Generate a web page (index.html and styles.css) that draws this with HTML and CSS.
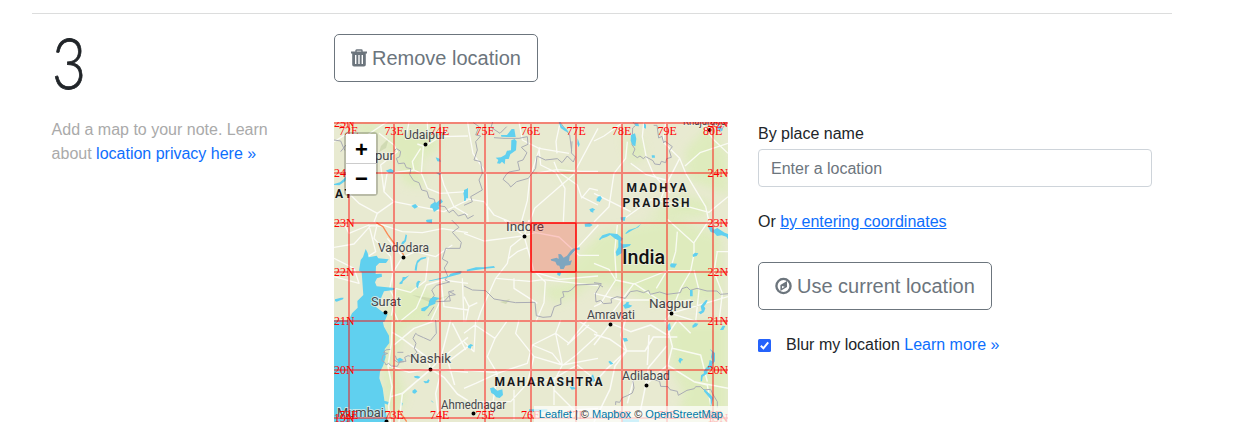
FILE: index.html
```html
<!DOCTYPE html>
<html lang="en">
<head>
<meta charset="utf-8">
<title>Add a location</title>
<link rel="stylesheet" href="styles.css">
</head>
<body>
<section class="step">
  <aside class="intro">
    <div class="number">3</div>
    <p class="help">Add a map to your note. Learn about <a href="#">location privacy here »</a></p>
  </aside>
  <div class="main">
    <button class="btn" type="button">
      <svg class="trash" width="16" height="18" viewBox="0 0 16 18"><path d="M5 3V1.6Q5 1 5.6 1h4.8q.6 0 .6.6V3" fill="none" stroke="currentColor" stroke-width="1.4"/><path fill="currentColor" fill-rule="evenodd" d="M0 2.6h16v1.9h-1.2v11.2q0 1.8-1.8 1.8H3q-1.8 0-1.8-1.8V4.5H0zM4 6v9h1.4V6zm3.3 0v9h1.4V6zm3.3 0v9H12V6z"/></svg>
      <span>Remove location</span>
    </button>
    <div class="columns">
      <div class="map">
        <svg class="tiles" viewBox="334 122 394 300">
          <defs><filter id="soft" x="-30%" y="-30%" width="160%" height="160%"><feGaussianBlur stdDeviation="5"/></filter></defs>
          <rect class="land" x="334" y="122" width="394" height="300"/>
          <g class="green" filter="url(#soft)">
            <path d="M395 128l40 0 5 19-20 15 5 25-20-2-10-28-12-10zM395 285l30 2 14 13-8 21-25 5-12 35 12 34-8 20h-14l-2-80zM602 232l70-14 50 18v65l-68 2-32-16-46-2-14-12zM622 137l20 2 4 18-16 6zM685 150l25-26 18 30v41l-40-15zM685 195l28 7-10 16-58-2zM668 322l60 0v98h-50l5-28-10-20zM540 287l36-4 10 8-31 13z"/>
            <path d="M555 165l20 8-8 10zM343 122l38 0-6 20zM345 355h15v20z"/>
          </g>
          <path class="hill" d="M381 146l8-8-3 10-7 4zM412 295l24 4 14-4-18 8zM500 302l10-3-4 5z"/>
          <g transform="translate(334 120) scale(.33333)">
            <path class="road" d="M0 65L40 40 95 48 160 5M135 40L180 75 190 95 140 135 150 215M250 72L268 78 262 160 240 150 235 125 260 85M280 75L318 50 402 48M280 5L282 45M262 160L280 205 318 220 402 215M160 155L150 215 180 245 130 280 120 306M225 6L215 60M318 155L330 195 360 260 402 285M40 215L75 250 130 280M240 150L160 160M402 240L330 275 180 245"/>
            <path class="border" d="M0 60l20 3 12 28M180 92l8 -6 12 8-3 16-10 5 6 16 18-2 6 14 14 3-4 18 12 18 16 6 8 22 16 4 6 20 16 4 4 18 28 4 12 18 12-8 16 18 20-6 8 14 18-10M36 75L20 95"/>
            <path class="water" d="M155 152l15-6 10 6-2 8-14-2zM305 112l12 4 4 9-11-1zM306 158l16 1-5 7zM232 257l12-5 8 8-10 6zM290 254l12-8 5 2 14-11 6 8-14 12 4 8-17 11-5-12-7-1zM388 218l14-14v34l-12-8zM278 299l17-1-3 8h-9zM0 192l18-5 18-16-2 12-18 13-16-1z"/>
          </g>
          <g transform="translate(464 120) scale(.33333)">
            <path class="road" d="M10 0l5 35 12 65 40 60 5 146M0 235l60 10 30 40 50 21M165 5l10 55 50 25 90 15M225 85l5 50 45 22 28 48M228 82l-30 90-8 70-18 64M402 25l-75 140-115 100-15 41M270 125l12 30 58 40 12 35 50 25M350 154l-70-5-60 10M303 205l-5 100M402 154h-52M290 0l-14 65 3 35M352 235l25-30 25 6"/>
            <path class="border" d="M88 0l-7 22 27 18 20-20M28 8L45 20 35 45 50 48 35 65 40 90 30 120 50 125 55 160 45 180 55 210 20 230 25 245 0 256M90 53l30 2 45 0 25-5 2 23-20 9 17 16-12 22-16 5 6 25-32 6-8 7-10 15 18 15 5 8 18-16 35-10 22-30 4-37 25 12 36-4 14 12 16-20 18 18 6-15-12-12 2-35M287 5l30 40 6 48"/>
            <path class="water" d="M111 45l18 0 14-18 8 0 4 24-25 0-18-1zM142 61l10-4 6 7-2 27-17 12-5 14-10 0-2 16-8-8-6 6-9-1 4-10-8-7 16-1 13-8 5-12 12-1zM288 5l6 13 14 10 6 9-10-3-14-10-6-17zM341 55l6 18-3 9-4-10zM376 268l10-4 8 5-6 3v6l-8-3zM0 210l12-5 0 15-7 22-5 1zM398 235h4v9h-4z"/>
          </g>
          <g transform="translate(594 120) scale(.33333)">
            <path class="road" d="M150 0l-5 50 12 62 22 52 50 55M110 130l45 33 60 17M215 5l-8 60 50 50 18 45 60 100 10 46M257 115l-38 75-20 50M402 70L318 98l-45 40M402 230l-57 47-75-20-100-18-90 65M0 220l50 25 60 30M100 65l-5 50-35 45-15 100-45 46M0 63l30-15 55-40M320 5l40 55 42 40"/>
            <path class="border" d="M112 0l13 16-9 8-2 50 9 13-7 16 14 10 8-5 10 8 7-6 22 12 5 10 16 2 4-10 13 4 3-12 14-4-6-20 9-12-22-17-4 6-5-20-10 5-5-38-10 0M402 0l-20 30"/>
            <path class="water" d="M111 45l12-5 4 16-3 23-8-3-6-14zM121 8l12 2 2 9-10-1zM150 10l6 4v12l-6-3zM173 106l9 0 1 7-9 0zM11 230l8-2 5 7-7 11-8-4zM80 292l15-1-3 12-11-2zM375 12l12 18-7 5-12-12z"/>
          </g>
          <g transform="translate(334 220) scale(.33333)">
            <path class="road" d="M0 82l60-10 50-55 35 2M25 0l20 40 60-25 20 80-40 25M125 8l80 27 60 3 60-12 77 12M130 10l-10 45 50 55 10 95M205 112l-28 45-10 50 15 30-10 50M210 110l35-15 60 15 50-35M283 112l-8 70-45 35-45-12M185 205l-5 70 13 30M0 170l75 20-15-45-60-30M160 55l50 60M402 190l-75-10-50 15-30 70-50 40M320 170l10 90 72 10M385 175l5 131M320 240l-30 65"/>
            <path class="border" d="M353 0l22 22-20 15 27 30-4 18-43 0-10 32 17 9-11 18 10 24-8 12 14 6-40 10-14 14 8 16-16 20 22-1 42-2-5-28 16-3M330 245l16-18 18-3-18-9M300 260l-18 28"/>
            <path class="highway" d="M127 8l20 12 14 23 20 28 18 18 10 16"/>
            <path class="water" d="M95 87l6 12 3 13 24-5 5 8 31 3-8 11-20 0-10 10-1 23 18-1 1 9-15 5-6 12 5 12 54 5-2 6-30 4-15 35-9 12 20 15 15 7-10 23H42l12-26 17-17-1-20 18-18-5-68-8-5 5-32 7-9zM199 80l5-14 7-5 4-18 4 3-3 18-8 9-8 8zM244 137l5-15 12-9 16-3-1 5-15 4-10 11-3 22-6-1zM196 189l8-8 2-10 9 0 11-5-12 12-7 6-2 7-8 2zM247 189l5-7 8 2-5 6-3 15-5-4zM283 182l36-8 25-6 5-7 30-8 5 2-5 7-26 7-21 6-46 9zM262 265l20-8 6-20 12-7 17 4-12 8-1 9-17 7-15 16-10-1zM3 238l18-5 8 0-2 5-19 7-5-2zM276 0h18v10l-16-3z"/>
          </g>
          <g transform="translate(464 220) scale(.33333)">
            <path class="road" d="M0 40l60 23 115-15 40-10 70 13 60 55 60 0M120 0l60 48 10 35 20 70 34 33-4 62-25 58M180 48l-40 32-10 50-35 45-45 100-10 30M97 175l100 9 40-5 165 18M135 115l25-20 30-12M180 50l15-50M217 158l68 20 117-10M325 100l78-85M0 230l15 30-10 45M15 260l25-12M150 175v30l70 45"/>
            <path class="border" d="M0 198l25 12 40 2 25 25 65 11 58-1 4 40 20 5 24-2 10-30 20-7-1-18 10-5-4-15 16 0 10-5 15-15 65-3 15 9"/>
            <path class="water" d="M8 149l28-7 24 0 30-4 3 5-30 3-54 8zM260 118l18-5 6 4-1-15 8 1 8 10 10-6 10-13 8-8 20-4v7l-12 0-18 20-2 15 9-3-5 14-15 2-5 10-10 0-3-10-7-1-5-11-12-3zM280 156h12l-4 12-8-3zM362 11l15-2 9 6-8 5-15 0z"/>
          </g>
          <g transform="translate(594 220) scale(.33333)">
            <path class="road" d="M0 130l45 18 20 32 55 12 100-40 70 0 10-50 0-32-80-72M70 15l-8 80 5 80M300 68l40-60M120 190l90 60 80-10M120 190l-65 88M65 180l-45 70-20 10M230 280l30-75 32-55M230 280l70-20 102-30M230 280l-50-40-100 0-80-20M230 280l-20 26M300 150l15 60-10 95M370 95l-10 60 25 65-10 85M402 95h-35M217 155l-30 50M230 280l80 25M250 35l-5 60-12 40"/>
            <path class="border" d="M0 188l22 3-18 30 2 25 14-5 8 10 25-2-2-12 18-7 25 5 15-20 20-3 20 6 15-7 5 12 28-7 22 7 40-5 5-12 15-5 10 10 20-6 30 8 30 0 10 10 25-2"/>
            <path class="water" d="M15 58l10-12 22-7 3 5-11 6-17 6-4 5zM48 40l22 2 17 14-8 10 5 7 27-1-4 6-21 7-2 14-16 10-3-13 8-15 0-20-10-5-13-10zM94 40l10-10 22-7 15-11-8 10-17 8-20 12zM228 135l4-5 17 1-7 12-12-1zM296 104l7-6 10 2-5 8-11 3zM342 20l10-1 8 10 10-5 22 14 12 5v18l-7-11-14-4-14 2-8-9-11-3zM87 256l7-4 4-6 8 1-3 6 12 4-9 6-13 3zM288 209l8 2v18l-8 0zM336 240l5 1-5 10-6 8 4 6-4 11-10 7-7-6 10-5-3-13 10-12z"/>
          </g>
          <g transform="translate(334 320) scale(.33333)">
            <path class="water" d="M40 0h105l5 20 15 27 1 22-14 18 3 24-8 27-9 17-2 20 10 30 5 35 2 22 5 30 4 14H0V0zM188 118l10-5 11 7-8 4-6 5zM240 169l10-2 10 4-5 5-13-3zM268 183l10 1 5-6 4 3-4 8-10 1zM235 212l8-5 7 7-7 7-7-2zM150 242l15 4-4 8-10-4zM200 245l6 5-2 9zM290 240l10 8-6-2z"/>
            <path class="road wide" d="M175 0l-3 70-10 70 12 60-10 60 5 46M180 75l60-50 70-25M290 147l-65 10-60-20M290 147l-85 75-10 84M290 147l30-30 82-65M290 147l40 25 40 50 32 20M290 147l112 10M170 230l35-10 85-72M350 0l-30 115M290 147l-10-35-80-60-25-15M402 80l-60 45 20 70M320 160l-15 60 10 85M355 10l40 80"/>
            <path class="border" d="M305 0l2 40-18 22-20-9-18-8-6-5-8 15 9 15-5 15 8 12-15 13-12-3-10 5 4 12-18 0-8 15-18-1-8-8-8 5-4-8-9-6 4-15 14-6-12-2 6-8 14-2M190 97h18M184 107l4 12M181 120l12 8 17-3"/>
            <path class="highway" d="M193 270l15 20 10 15M168 275v20"/>
          </g>
          <g transform="translate(464 320) scale(.33333)">
            <path class="road" d="M35 0l-5 95-30-30M0 40l33-25 60 40 35-50M95 50l-25 60 30 50-65 30-35 15M100 160l90-30 15-55 70-35 40 30 60-55M165 0l-10 40 55 70 85 25 107-20M275 40l20 95-25 50 0 70M210 110l-20 80-50 55-110 0M270 210l60 60 72-5M402 45l-65 60-40 30M290 0l-15 40M340 0l60 40M0 150l100 8M100 160l-15 100M205 75l60 25 28 35M190 190l80-15 70-40 62 50M150 210v90M370 0l-60 75"/>
            <path class="water" d="M11 78l9-6 8 4-7 4v6l-8-2zM78 205l10-3 12 10 15-4 2 17-10 9-10-2-8-9-7-4zM285 180l15 3 2 8-10 1zM317 201l11-4 7 10-12 2zM382 168l5-5 7 20-11 4zM195 268h55v7h-55zM0 250l10-5-4 9z"/>
          </g>
          <g transform="translate(594 320) scale(.33333)">
            <path class="road wide" d="M0 75l50-65 60 25 60-20 50 30 30-45M95 0l-15 45 18 48-35 45-15 70-48 98M98 93l55 0 25-42 72 0M98 93l-50-35-48-15M160 135l5-90M155 195l8-52 55-65M155 195l-10 50-13 60M155 195l65-60 80 50 102 20M220 140l15-60-20-80M0 190l40-45 55-50M300 185l40 10 10 60M100 250l20-75M250 0l40 40M235 85l85 20 20 80"/>
            <path class="border" d="M65 255l0-10 12 2 8-14 15-6 15-8 5-15-3-20 15-18 20 5 45 13 3 15 22 1 6 9 22 5 3 12 26-15 22-5 4-6 15 0 10 10 20-2 5 12 15 25 0 18"/>
            <path class="water" d="M86 55l12-1 4 9-11 2zM221 15l7-6 3 18-7 6-4-8zM295 17l8-8 10 2-5 8-12 5zM378 30l8-13 8 1-6 12zM253 122l4-9 5 2 6 5-6 2-3 9zM43 125l5-3 10 9-8 3zM347 86l7 10-3 15 4 12-8-3-3 15-15 17 1 8-9 6-1 18 4 0 2-14 15-10-1-8 16-10-2-8 9-10 0-25zM330 207l18 15 10 12-8 28 0-24-20-24zM85 298h50v8H85z"/>
          </g>
          <g class="places">
            <text x="404" y="139" textLength="42" lengthAdjust="spacingAndGlyphs">Udaipur</text><text x="375" y="160">pur</text><text x="378" y="252" textLength="51" lengthAdjust="spacingAndGlyphs">Vadodara</text><text x="506" y="230.500" textLength="38" lengthAdjust="spacingAndGlyphs">Indore</text><text x="371" y="306" textLength="30" lengthAdjust="spacingAndGlyphs">Surat</text><text x="410" y="363" textLength="41" lengthAdjust="spacingAndGlyphs">Nashik</text><text x="649" y="308" textLength="44" lengthAdjust="spacingAndGlyphs">Nagpur</text><text x="587" y="319" textLength="48" lengthAdjust="spacingAndGlyphs">Amravati</text><text x="622" y="380" textLength="48" lengthAdjust="spacingAndGlyphs">Adilabad</text><text x="441" y="409" textLength="65" lengthAdjust="spacingAndGlyphs">Ahmednagar</text><text x="337" y="417" textLength="47" lengthAdjust="spacingAndGlyphs">Mumbai</text><text x="683" y="125" textLength="43" lengthAdjust="spacingAndGlyphs">Khajuraho</text>
            <g class="state"><text x="626.500" y="192" textLength="60">MADHYA</text><text x="622.500" y="207" textLength="67">PRADESH</text><text x="494.500" y="385.500" textLength="108">MAHARASHTRA</text><text x="335" y="198" textLength="17">AT</text></g>
            <text class="country" x="622" y="264" textLength="43" lengthAdjust="spacingAndGlyphs">India</text>
          </g>
          <path class="dots" d="M425.500 144.500h0M403.500 257.500h0M524.500 236.500h0M385.500 312.500h0M430.500 369.500h0M671.500 313.500h0M610.500 324.500h0M646.500 385.500h0M473.500 413.500h0M386.500 421.500h0M709.500 130h0"/>
          <path class="grid" d="M349 122v300M394 122v300M440 122v300M485 122v300M531 122v300M576 122v300M622 122v300M667 122v300M713 122v300M334 123h394M334 173h394M334 223h394M334 272h394M334 321h394M334 370h394M334 418h394"/>
          <rect class="selected" x="531" y="223" width="45" height="49"/>
          <g class="coords">
            <text x="339" y="135">72E</text><text x="384.500" y="135">73E</text><text x="430" y="135">74E</text><text x="475.500" y="135">75E</text><text x="521" y="135">76E</text><text x="566.500" y="135">77E</text><text x="612" y="135">78E</text><text x="657.500" y="135">79E</text><text x="703" y="135">80E</text>
            <text x="339" y="419">72E</text><text x="384.500" y="419">73E</text><text x="430" y="419">74E</text><text x="475.500" y="419">75E</text><text x="521" y="419">76E</text><text x="566.500" y="419">77E</text><text x="612" y="419">78E</text><text x="657.500" y="419">79E</text><text x="703" y="419">80E</text>
            <text x="334" y="127">25N</text><text x="334" y="177">24N</text><text x="334" y="227">23N</text><text x="334" y="276">22N</text><text x="334" y="325">21N</text><text x="334" y="374">20N</text><text x="334" y="422">19N</text>
            <text x="707.500" y="127">25N</text><text x="707.500" y="177">24N</text><text x="707.500" y="227">23N</text><text x="707.500" y="276">22N</text><text x="707.500" y="325">21N</text><text x="707.500" y="374">20N</text><text x="707.500" y="422">19N</text>
          </g>
        </svg>
        <div class="zoom"><a href="#">+</a><a href="#">−</a></div>
        <div class="credit"><a href="#">Leaflet</a> | © <a href="#">Mapbox</a> © <a href="#">OpenStreetMap</a></div>
      </div>
      <form class="controls">
        <label for="place">By place name</label>
        <input id="place" class="place" type="text" placeholder="Enter a location">
        <p class="or">Or <a href="#">by entering coordinates</a></p>
        <button class="btn current" type="button">
          <svg class="compass" width="17" height="18" viewBox="0 0 18 18"><circle cx="9" cy="9" r="7.500" fill="none" stroke="currentColor" stroke-width="2.500"/><path fill="currentColor" fill-rule="evenodd" d="M12.700 3.800v6.300l-7 4.300V8zM7.400 8.900v2.700l2.900-1.800z"/></svg>
          <span>Use current location</span>
        </button>
        <div class="blur">
          <svg class="check" width="13" height="13" viewBox="0 0 13 13"><rect width="13" height="13" rx="1.500" fill="#2563fb"/><path d="M2.800 6.800l2.600 2.500L10.200 3.400" fill="none" stroke="#fff" stroke-width="2"/></svg>
          <span>Blur my location <a href="#">Learn more »</a></span>
        </div>
      </form>
    </div>
  </div>
</section>
</body>
</html>
```
FILE: styles.css
```css
* { box-sizing: border-box; }
body {
  margin: 0;
  padding: 13px 0 0 32px;
  overflow: hidden;
  background: #fff;
  color: #212529;
  font: 16px/24px "Liberation Sans", Arial, sans-serif;
}
a { color: #0d6efd; text-decoration: none; }
.step {
  display: flex;
  width: 1140px;
  padding: 20px 20px 0 19.6px;
  border-top: 1px solid #dcdddd;
}
.intro { width: 282.4px; }
.number {
  width: 40px;
  height: 84px;
  font: 300 70px/56px Lato, sans-serif;
  -webkit-text-stroke: .8px #212529;
  transform: scaleX(.84);
  transform-origin: left;
}
.help { width: 225px; margin: 0; color: #aaa; }
.main { width: 818px; }
.btn {
  display: flex;
  align-items: center;
  gap: 5px;
  width: max-content;
  height: 48px;
  padding: 0 16px;
  border: 1px solid #6c757d;
  border-radius: 5px;
  background: #fff;
  color: #6c757d;
  font: 20px/30px "Liberation Sans", Arial, sans-serif;
}
.columns { display: flex; gap: 30px; margin-top: 40px; }
.map { position: relative; width: 394px; height: 300px; overflow: hidden; }
.tiles { display: block; width: 394px; height: 300px; }
.land { fill: #e8ead1; }
.green { fill: #dcecb9; opacity: .8; }
.hill { fill: #c8d3a9; opacity: .7; }
.road { fill: none; stroke: #fff; stroke-width: 4; stroke-linejoin: round; opacity: .8; }
.wide { stroke-width: 4.500; }
.border { fill: none; stroke: #a9abb4; stroke-width: 3; stroke-linejoin: round; }
.highway { fill: none; stroke: #fa8a55; stroke-width: 4; }
.water { fill: #60d0ef; }
.places {
  fill: #45474b;
  stroke: #f0f1e5;
  stroke-width: 2px;
  stroke-opacity: .7;
  paint-order: stroke;
  font: 13px Roboto, sans-serif;
}
.state { fill: #17191b; font-size: 12px; font-weight: 700; }
.country { fill: #111; font-size: 20px; font-weight: 500; }
.dots { stroke: #000; stroke-width: 4; stroke-linecap: round; }
.grid { stroke: #f00; stroke-opacity: .44; stroke-width: 2; }
.selected { fill: #f00; fill-opacity: .2; stroke: #f00; stroke-width: 1.200; }
.coords { fill: #f00; font: 12px "Liberation Serif", serif; }
.zoom {
  position: absolute;
  left: 10px;
  top: 10px;
  width: 34px;
  border: 2px solid rgba(0, 0, 0, .2);
  border-radius: 4px;
  background-clip: padding-box;
}
.zoom a {
  display: block;
  height: 30px;
  padding-left: 1px;
  background: #fff;
  color: #000;
  text-align: center;
  font: bold 22px/30px "Liberation Sans", sans-serif;
}
.zoom a:first-child { border-bottom: 1px solid #ccc; line-height: 31px; }
.credit {
  position: absolute;
  right: 0;
  bottom: 0;
  height: 16px;
  padding: 0 5px;
  background: rgba(255, 255, 255, .7);
  color: #333;
  font: 11px/16px "Liberation Sans", sans-serif;
}
.credit a { color: #0078a8; }
.controls { display: flex; flex-direction: column; align-items: flex-start; width: 394px; }
.controls label { height: 27px; }
.place {
  width: 394px;
  height: 38px;
  padding: 7px 12px 5px;
  border: 1px solid #ced4da;
  border-radius: 4px;
  font: 16px/24px "Liberation Sans", sans-serif;
}
.place::placeholder { color: #6c757d; opacity: 1; }
.or { margin: 23px 0 28px; }
.or a { text-decoration: underline; }
.blur { display: flex; align-items: center; gap: 15px; margin-top: 23px; }
```
